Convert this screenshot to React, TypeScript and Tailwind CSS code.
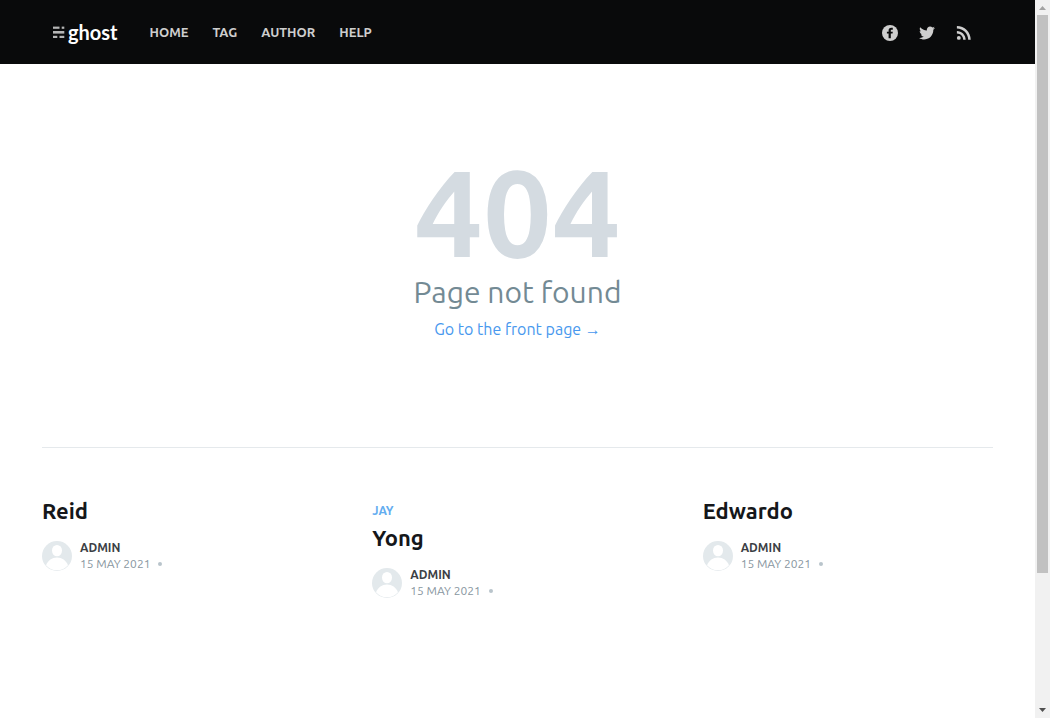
const navItems = ['Home', 'Tag', 'Author', 'Help'];

type Post = { title: string; tag?: string; author: string; date: string };

const posts: Post[] = [
  { title: 'Reid', author: 'Admin', date: '15 May 2021' },
  { title: 'Yong', tag: 'Jay', author: 'Admin', date: '15 May 2021' },
  { title: 'Edwardo', author: 'Admin', date: '15 May 2021' },
];

function GhostMark() {
  return (
    <svg viewBox="0 0 12 12" className="size-3" aria-hidden="true">
      <g fill="#ffffff" fillOpacity="0.7">
        <rect x="0" y="0.6" width="6.5" height="2.2" />
        <rect x="8.7" y="0.6" width="2.6" height="2.2" />
        <rect x="0" y="5" width="11.3" height="2.6" />
        <rect x="0" y="9.8" width="4.3" height="2.2" />
        <rect x="6.5" y="9.8" width="4.8" height="2.2" />
      </g>
    </svg>
  );
}

function Avatar() {
  return (
    <svg viewBox="0 0 30 30" className="size-[30px] shrink-0" aria-hidden="true">
      <circle cx="15" cy="15" r="15" fill="#e3e9ec" />
      <ellipse cx="15" cy="9.6" rx="5" ry="5.7" fill="#ffffff" />
      <path d="M4 24.3C6 19.6 10 16.6 15 16.6s9 3 11 7.7C23.4 27.4 19.4 29.3 15 29.3S6.6 27.4 4 24.3z" fill="#ffffff" />
    </svg>
  );
}

function SocialLinks() {
  return (
    <div className="flex items-center gap-5 pt-0.5 text-[#cecece]">
      <a href="#facebook" aria-label="Facebook">
        <svg viewBox="0 0 32 32" className="size-4">
          <circle cx="16" cy="16" r="16" fill="currentColor" />
          <path d="M21.6 9.3h-2.9c-.7 0-1.1.4-1.1 1.2v2.900h4l-.5 3.500h-3.500v9.600h-4.400v-9.600H9.800v-3.500h3.400v-2.600c0-3.600 2-5.500 5.200-5.500h3.200z" fill="#090a0b" />
        </svg>
      </a>
      <a href="#twitter" aria-label="Twitter">
        <svg viewBox="0 0 32 32" className="size-[18px]" fill="currentColor">
          <path d="M30.063 7.313c-.813 1.125-1.75 2.125-2.875 2.938v.75c0 1.563-.188 3.125-.688 4.625a15.088 15.088 0 0 1-2.063 4.438c-.875 1.438-2 2.688-3.25 3.813a15.015 15.015 0 0 1-4.625 2.563c-1.813.688-3.75 1-5.75 1-3.25 0-6.188-.875-8.875-2.625.438.063.875.125 1.375.125 2.688 0 5.063-.875 7.188-2.5-1.25 0-2.375-.375-3.375-1.125s-1.688-1.688-2.063-2.875c.438.063.813.125 1.125.125.5 0 1-.063 1.5-.25-1.313-.25-2.438-.938-3.313-1.938a5.673 5.673 0 0 1-1.313-3.688v-.063c.813.438 1.688.688 2.625.688a5.228 5.228 0 0 1-1.875-2c-.5-.875-.688-1.813-.688-2.75 0-1.063.25-2.063.75-2.938 1.438 1.75 3.188 3.188 5.25 4.25s4.313 1.688 6.688 1.813a5.579 5.579 0 0 1 1.5-5.438c1.125-1.125 2.5-1.688 4.125-1.688s3.063.625 4.188 1.813a11.48 11.48 0 0 0 3.688-1.375c-.438 1.375-1.313 2.438-2.563 3.188 1.125-.125 2.188-.438 3.313-.875z" />
        </svg>
      </a>
      <a href="#rss" aria-label="RSS">
        <svg viewBox="3 3.3 18 18" className="size-4" fill="currentColor">
          <circle cx="6.18" cy="17.82" r="2.18" />
          <path d="M4 4.44v2.83c7.03 0 12.73 5.7 12.73 12.73h2.83c0-8.59-6.97-15.56-15.56-15.56zm0 5.66v2.83c3.9 0 7.07 3.17 7.07 7.07h2.83c0-5.47-4.43-9.9-9.9-9.9z" />
        </svg>
      </a>
    </div>
  );
}

function PostCard({ post }: { post: Post }) {
  return (
    <article className="text-xs uppercase">
      {post.tag && (
        <a href="#tag" className="mb-0.5 block h-[25px] pt-[5px] leading-4 font-semibold text-[#63adf0]">
          {post.tag}
        </a>
      )}
      <h2 className="text-[22px] leading-[26px] font-bold text-[#15171a] normal-case">
        <a href="#post">{post.title}</a>
      </h2>
      <div className="mt-4 flex items-center gap-2">
        <Avatar />
        <div className="leading-4">
          <a href="#author" className="block font-bold text-[#3c3f45]">
            {post.author}
          </a>
          <div className="flex items-center gap-2 text-[#8896a0]">
            <time dateTime="2021-05-15">{post.date}</time>
            <span className="size-1 rounded-full bg-[#b9c4cb]" />
          </div>
        </div>
      </div>
    </article>
  );
}

function ScrollRail() {
  return (
    <div aria-hidden="true" className="sticky top-0 flex h-screen w-[15px] shrink-0 flex-col items-center bg-[#f1f1f1]">
      <svg viewBox="0 0 15 15" className="size-[15px] shrink-0" fill="#a3a3a3">
        <path d="M4 10h7L7.5 6z" />
      </svg>
      <div className="w-[11px] grow-[558] basis-0 bg-[#c1c1c1]" />
      <div className="grow-[130] basis-0" />
      <svg viewBox="0 0 15 15" className="size-[15px] shrink-0" fill="#505050">
        <path d="M4 5h7L7.5 9z" />
      </svg>
    </div>
  );
}

export default function App() {
  return (
    <div className="flex min-h-screen bg-white font-['Ubuntu','Open_Sans','Noto_Sans',sans-serif]">
      <div className="min-w-0 flex-1">
        <header className="flex h-16 items-center justify-between bg-[#090a0b] pr-[63px] pl-[53px]">
          <div className="flex items-center gap-8">
            <a href="#home" className="flex items-center gap-[3px]">
              <GhostMark />
              <span className="font-['Lato',sans-serif] text-xl leading-6 font-bold text-white">ghost</span>
            </a>
            <nav className="flex items-center gap-6 text-[13px] leading-5 font-semibold text-[#cecece] uppercase">
              {navItems.map((item) => (
                <a key={item} href={`#${item.toLowerCase()}`}>
                  {item}
                </a>
              ))}
            </nav>
          </div>
          <SocialLinks />
        </header>

        <main className="px-[42px]">
          <section className="flex flex-col items-center pt-[87px] pb-[106px] text-center">
            <h1 className="text-[122px] leading-[121px] font-bold text-[#d4dbe1]">404</h1>
            <p className="text-[30px] leading-10 text-[#738a94]">Page not found</p>
            <a href="#home" className="mt-[5px] text-base leading-6 text-[#4798ee]">
              Go to the front page →
            </a>
          </section>

          <section className="grid grid-cols-3 gap-10 border-t border-[#e5e9ec] pt-[50px] pb-16">
            {posts.map((post) => (
              <PostCard key={post.title} post={post} />
            ))}
          </section>
        </main>
      </div>
      <ScrollRail />
    </div>
  );
}
